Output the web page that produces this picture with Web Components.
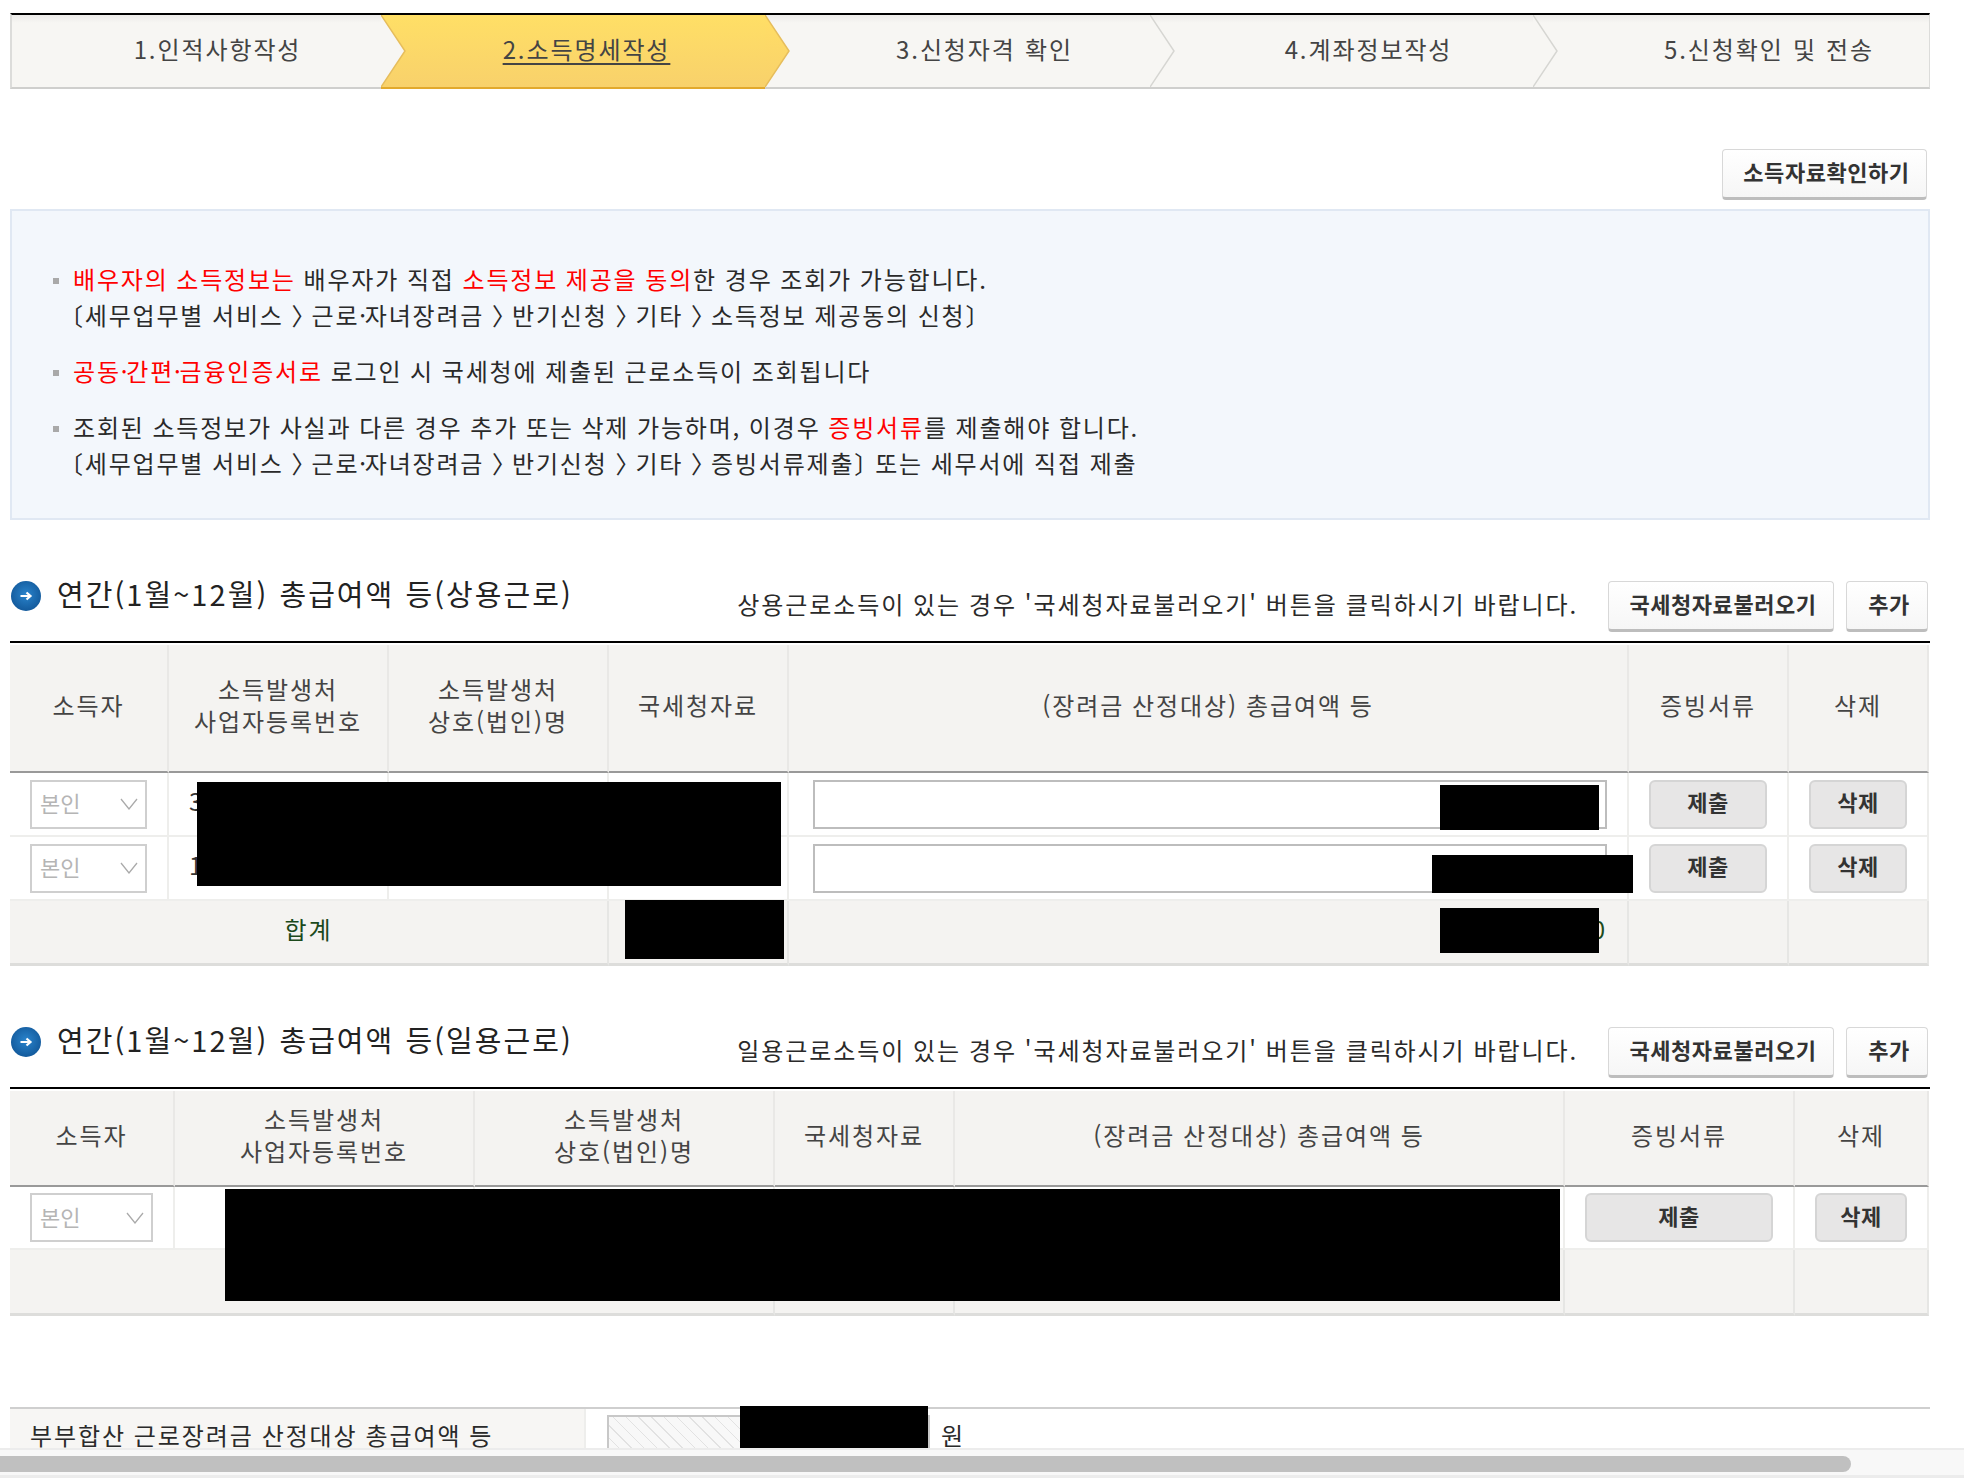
<!DOCTYPE html>
<html lang="ko">
<head>
<meta charset="utf-8">
<title>소득명세작성</title>
<style>
  html, body { margin: 0; padding: 0; background: #fff; }
  body { font-family: "Noto Sans CJK KR", "Noto Sans", sans-serif; color: #333; }
  .r { color: #f00; }
  .ang { letter-spacing: -11.8px; }
  .open { margin-left: -14px; }
  .close { letter-spacing: -11px; }
  .dot { letter-spacing: -1.2px; }
</style>
</head>
<body>
<app-page>
  <step-bar>
    <step-item width="369" pad="42" z="6">1.인적사항작성</step-item>
    <step-item width="384" pad="27" z="5" active>2.소득명세작성</step-item>
    <step-item width="385" pad="54" z="4">3.신청자격 확인</step-item>
    <step-item width="383" pad="54" z="3">4.계좌정보작성</step-item>
    <step-item width="397" pad="75" z="2" last>5.신청확인 및 전송</step-item>
  </step-bar>

  <top-actions><act-button w="205">소득자료확인하기</act-button></top-actions>

  <info-box>
    <info-item>
      <span class="r">배우자의 소득정보는</span> 배우자가 직접 <span class="r">소득정보 제공을 동의</span>한 경우 조회가 가능합니다.<br>
      <span class="open">〔</span>세무업무별 서비스 <span class="ang">〉</span> 근로<span class="dot">·</span>자녀장려금 <span class="ang">〉</span> 반기신청 <span class="ang">〉</span> 기타 <span class="ang">〉</span> 소득정보 제공동의 신청〕
    </info-item>
    <info-item>
      <span class="r">공동<span class="dot">·</span>간편<span class="dot">·</span>금융인증서로</span> 로그인 시 국세청에 제출된 근로소득이 조회됩니다
    </info-item>
    <info-item>
      조회된 소득정보가 사실과 다른 경우 추가 또는 삭제 가능하며, 이경우 <span class="r">증빙서류</span>를 제출해야 합니다.<br>
      <span class="open">〔</span>세무업무별 서비스 <span class="ang">〉</span> 근로<span class="dot">·</span>자녀장려금 <span class="ang">〉</span> 반기신청 <span class="ang">〉</span> 기타 <span class="ang">〉</span> 증빙서류제출<span class="close">〕</span> 또는 세무서에 직접 제출
    </info-item>
  </info-box>

  <section-head title="연간(1월~12월) 총급여액 등(상용근로)">
    상용근로소득이 있는 경우 '국세청자료불러오기' 버튼을 클릭하시기 바랍니다.
  </section-head>
  <income-table cols="159px 220px 220px 180px 840px 160px 140px" rows="128px 64px 64px 65px" lift="7">
    <tb-cell head>소득자</tb-cell>
    <tb-cell head>소득발생처<br>사업자등록번호</tb-cell>
    <tb-cell head>소득발생처<br>상호(법인)명</tb-cell>
    <tb-cell head>국세청자료</tb-cell>
    <tb-cell head>(장려금 산정대상) 총급여액 등</tb-cell>
    <tb-cell head>증빙서류</tb-cell>
    <tb-cell head>삭제</tb-cell>

    <tb-cell><pick-box w="117"></pick-box></tb-cell>
    <tb-cell start>3</tb-cell>
    <tb-cell></tb-cell>
    <tb-cell></tb-cell>
    <tb-cell><amount-input></amount-input></tb-cell>
    <tb-cell><act-button w="118" kind="gray">제출</act-button></tb-cell>
    <tb-cell><act-button w="98" kind="gray">삭제</act-button></tb-cell>

    <tb-cell><pick-box w="117"></pick-box></tb-cell>
    <tb-cell start>1</tb-cell>
    <tb-cell></tb-cell>
    <tb-cell></tb-cell>
    <tb-cell><amount-input></amount-input></tb-cell>
    <tb-cell><act-button w="118" kind="gray">제출</act-button></tb-cell>
    <tb-cell><act-button w="98" kind="gray">삭제</act-button></tb-cell>

    <tb-cell sum span="3">합계</tb-cell>
    <tb-cell sum></tb-cell>
    <tb-cell sum end>0</tb-cell>
    <tb-cell sum></tb-cell>
    <tb-cell sum></tb-cell>
  </income-table>

  <section-head title="연간(1월~12월) 총급여액 등(일용근로)">
    일용근로소득이 있는 경우 '국세청자료불러오기' 버튼을 클릭하시기 바랍니다.
  </section-head>
  <income-table cols="165px 300px 300px 180px 610px 230px 134px" rows="96px 63px 66px" lift="7">
    <tb-cell head>소득자</tb-cell>
    <tb-cell head>소득발생처<br>사업자등록번호</tb-cell>
    <tb-cell head>소득발생처<br>상호(법인)명</tb-cell>
    <tb-cell head>국세청자료</tb-cell>
    <tb-cell head>(장려금 산정대상) 총급여액 등</tb-cell>
    <tb-cell head>증빙서류</tb-cell>
    <tb-cell head>삭제</tb-cell>

    <tb-cell><pick-box w="123"></pick-box></tb-cell>
    <tb-cell></tb-cell>
    <tb-cell></tb-cell>
    <tb-cell></tb-cell>
    <tb-cell></tb-cell>
    <tb-cell><act-button w="188" kind="gray">제출</act-button></tb-cell>
    <tb-cell><act-button w="92" kind="gray">삭제</act-button></tb-cell>

    <tb-cell sum span="3"></tb-cell>
    <tb-cell sum></tb-cell>
    <tb-cell sum></tb-cell>
    <tb-cell sum></tb-cell>
    <tb-cell sum></tb-cell>
  </income-table>

  <couple-row>부부합산 근로장려금 산정대상 총급여액 등</couple-row>

  <black-out x="197" y="782" w="584" h="104"></black-out>
  <black-out x="1440" y="785" w="159" h="45"></black-out>
  <black-out x="1432" y="855" w="201" h="38"></black-out>
  <black-out x="625" y="900" w="159" h="59"></black-out>
  <black-out x="1440" y="908" w="159" h="45"></black-out>
  <black-out x="225" y="1189" w="1335" h="112"></black-out>
  <black-out x="740" y="1406" w="188" h="47"></black-out>

  <page-scroll></page-scroll>
</app-page>

<script>
// shared text metrics for the whole screen
const TEXT = 'font-family:"Noto Sans CJK KR","Noto Sans",sans-serif;letter-spacing:var(--ls,1.9px);word-spacing:var(--ws,-0.7px);';

class AppPage extends HTMLElement {
  constructor() {
    super();
    this.attachShadow({ mode: "open" });
    this.shadowRoot.innerHTML = `
      <style>
        :host {
          display: block;
          position: relative;
          width: 1964px;
          height: 1478px;
          overflow: hidden;
          box-sizing: border-box;
          padding: 13px 34px 0 10px;
          background: #fff;
        }
      </style>
      <slot></slot>
    `;
  }
}

class StepBar extends HTMLElement {
  constructor() {
    super();
    this.attachShadow({ mode: "open" });
    this.shadowRoot.innerHTML = `
      <style>
        :host {
          display: flex;
          height: 76px;
          box-sizing: border-box;
          border-top: 2px solid #000;
          border-bottom: 2px solid #cfcfcd;
          border-left: 2px solid #dcdcda;
          border-right: 1px solid #dcdcda;
          background: linear-gradient(#ecebe9, #f7f6f3 8px);
        }
      </style>
      <slot></slot>
    `;
  }
}

class StepItem extends HTMLElement {
  constructor() {
    super();
    this.attachShadow({ mode: "open" });
  }

  connectedCallback() {
    const active = this.hasAttribute("active");
    const last = this.hasAttribute("last");
    const before = this.nextElementSibling && this.nextElementSibling.hasAttribute("active");
    const line = active || before ? "#e6bd5c" : "#d6d6d2";
    this.shadowRoot.innerHTML = `
      <style>
        :host {
          display: flex;
          position: relative;
          z-index: ${this.getAttribute("z")};
          align-items: center;
          justify-content: center;
          box-sizing: border-box;
          flex: 0 0 ${this.getAttribute("width")}px;
          padding: 0 0 5px ${this.getAttribute("pad")}px;
          height: 72px;
          font-size: 24px;
          color: #444;
          --ws: 0.5px;
          ${TEXT}
          background: ${active ? "linear-gradient(#ffdf66,#f8d16b)" : "transparent"};
          ${active ? "box-shadow: 0 2px 0 #e2a92c;" : ""}
        }
        span { ${active ? "text-decoration: underline; text-underline-offset: 4px;" : ""} }
        svg { position: absolute; left: 100%; top: 0; height: 72px; width: 26px; }
      </style>
      <span><slot></slot></span>
      ${last ? "" : `<svg viewBox="0 0 26 72"><defs><linearGradient id="g" x1="0" y1="0" x2="0" y2="1"><stop offset="0" stop-color="${active ? "#ffdf66" : "#f4f3f1"}"/><stop offset="0.1" stop-color="${active ? "#ffdd66" : "#f7f6f3"}"/><stop offset="1" stop-color="${active ? "#f8d16b" : "#f7f6f3"}"/></linearGradient></defs>
      <path d="M0 0 L24 36 L0 72 Z" fill="url(#g)"/><path d="M0 0 L24 36 L0 72" fill="none" stroke="${line}" stroke-width="1.5"/></svg>`}
    `;
  }
}

class TopActions extends HTMLElement {
  constructor() {
    super();
    this.attachShadow({ mode: "open" });
    this.shadowRoot.innerHTML = `
      <style>
        :host { display: flex; justify-content: flex-end; margin-top: 60px; padding-right: 3px; }
      </style>
      <slot></slot>
    `;
  }
}

class ActButton extends HTMLElement {
  constructor() {
    super();
    this.attachShadow({ mode: "open" });
  }

  connectedCallback() {
    const gray = this.getAttribute("kind") === "gray";
    this.shadowRoot.innerHTML = `
      <style>
        :host {
          display: inline-flex;
          align-items: center;
          justify-content: center;
          flex: none;
          box-sizing: border-box;
          width: ${this.getAttribute("w")}px;
          height: ${gray ? 49 : 51}px;
          font-size: 22px;
          font-weight: 700;
          color: #333;
          --ls: 0.55px;
          ${TEXT}
          ${gray
            ? "background:#e7e6e6;border:2px solid #d5d5d5;border-radius:6px;padding-bottom:6px;"
            : "background:linear-gradient(#fff,#f6f6f6);border:1px solid #d8d8d8;border-bottom:3px solid #bdbdbd;border-radius:4px;padding:0 0 5px 4px;"}
        }
      </style>
      <slot></slot>
    `;
  }
}

class InfoBox extends HTMLElement {
  constructor() {
    super();
    this.attachShadow({ mode: "open" });
    this.shadowRoot.innerHTML = `
      <style>
        :host {
          display: flex;
          flex-direction: column;
          gap: 20px;
          box-sizing: border-box;
          width: 1920px;
          height: 311px;
          margin-top: 9px;
          padding: 50px 0 0 41px;
          background: #f3f7fc;
          border: 2px solid #e0e8f3;
        }
      </style>
      <slot></slot>
    `;
  }
}

class InfoItem extends HTMLElement {
  constructor() {
    super();
    this.attachShadow({ mode: "open" });
    this.shadowRoot.innerHTML = `
      <style>
        :host {
          display: block;
          position: relative;
          padding-left: 20px;
          font-size: 24px;
          line-height: 36px;
          color: #2a2a2a;
          --ls: 1.8px;
          ${TEXT}
        }
        :host::before {
          content: "";
          position: absolute;
          left: 0;
          top: 17px;
          width: 6px;
          height: 6px;
          background: #a9a9a9;
        }
      </style>
      <slot></slot>
    `;
  }
}

class SectionHead extends HTMLElement {
  constructor() {
    super();
    this.attachShadow({ mode: "open" });
  }

  connectedCallback() {
    this.shadowRoot.innerHTML = `
      <style>
        :host {
          display: flex;
          box-sizing: border-box;
          width: 1920px;
          height: 62px;
          margin-top: 61px;
          border-bottom: 2px solid #000;
        }
        svg { width: 30px; height: 30px; flex: none; margin: 0 16px 0 1px; }
        h3 {
          margin: -8px 0 0;
          font-size: 29px;
          line-height: 40px;
          font-weight: 400;
          color: #222;
          --ws: 1px;
          --ls: 2.05px;
          ${TEXT}
          white-space: nowrap;
        }
        p {
          margin: 2px 30px 0 auto;
          font-size: 24px;
          line-height: 42px;
          color: #2a2a2a;
          ${TEXT}
          white-space: nowrap;
        }
        .btns { display: flex; gap: 12px; padding-right: 2px; }
      </style>
      <svg viewBox="0 0 30 30">
        <defs><radialGradient id="b" cx="50%" cy="45%" r="55%"><stop offset="0" stop-color="#2a84cc"/><stop offset="1" stop-color="#135a9c"/></radialGradient></defs>
        <circle cx="15" cy="15" r="15" fill="url(#b)"/>
        <path d="M9.5 15 H19 M15.5 11.5 L19.5 15 L15.5 18.5" fill="none" stroke="#fff" stroke-width="2.2"/>
      </svg>
      <h3>${this.getAttribute("title")}</h3>
      <p><slot></slot></p>
      <div class="btns">
        <act-button w="226">국세청자료불러오기</act-button>
        <act-button w="82">추가</act-button>
      </div>
    `;
  }
}

class IncomeTable extends HTMLElement {
  constructor() {
    super();
    this.attachShadow({ mode: "open" });
  }

  connectedCallback() {
    this.shadowRoot.innerHTML = `
      <style>
        :host {
          display: grid;
          width: 1919px;
          margin-top: 2px;
          --lift: ${this.getAttribute("lift")}px;
          grid-template-columns: ${this.getAttribute("cols")};
          grid-template-rows: ${this.getAttribute("rows")};
        }
      </style>
      <slot></slot>
    `;
  }
}

class TbCell extends HTMLElement {
  constructor() {
    super();
    this.attachShadow({ mode: "open" });
    this.shadowRoot.innerHTML = `
      <style>
        :host {
          display: flex;
          align-items: center;
          justify-content: center;
          box-sizing: border-box;
          text-align: center;
          font-size: 24px;
          line-height: 32px;
          color: #333;
          background: #fff;
          border-right: 2px solid #eeeeec;
          border-bottom: 2px solid #eeeeec;
          ${TEXT}
        }
        :host([head]) {
          background: #f4f3f1;
          color: #444;
          padding-bottom: var(--lift);
          border-right-color: #e9e8e6;
          border-bottom: 2px solid #999;
        }
        :host([sum]) {
          background: #f4f3f1;
          color: #1c4a1c;
          padding-bottom: var(--lift);
          border-right-color: #e6e6e4;
          border-bottom: 3px solid #dddddb;
        }
        :host([start]) { justify-content: flex-start; padding-left: 20px; padding-bottom: var(--lift); }
        :host([end]) { justify-content: flex-end; padding-right: 20px; }
        :host([span="3"]) { grid-column: span 3; }
      </style>
      <slot></slot>
    `;
  }
}

class PickBox extends HTMLElement {
  constructor() {
    super();
    this.attachShadow({ mode: "open" });
  }

  connectedCallback() {
    this.shadowRoot.innerHTML = `
      <style>
        :host {
          display: flex;
          align-items: center;
          justify-content: space-between;
          box-sizing: border-box;
          width: ${this.getAttribute("w")}px;
          height: 49px;
          padding: 0 7px 0 8px;
          background: #fff;
          border: 2px solid #cfcfcf;
          font-size: 22px;
          color: #b5b5b5;
          --ls: 0;
          ${TEXT}
        }
        span { position: relative; top: -2px; }
        svg { width: 18px; height: 12px; }
      </style>
      <span>본인</span>
      <svg viewBox="0 0 18 12"><path d="M1 1 L9 11 L17 1" fill="none" stroke="#aaa" stroke-width="1.3"/></svg>
    `;
  }
}

class AmountInput extends HTMLElement {
  constructor() {
    super();
    this.attachShadow({ mode: "open" });
    this.shadowRoot.innerHTML = `
      <style>
        :host {
          display: block;
          box-sizing: border-box;
          width: 794px;
          height: 49px;
          margin-left: 4px;
          background: #fff;
          border: 2px solid #bdbdbd;
        }
      </style>
    `;
  }
}

class CoupleRow extends HTMLElement {
  constructor() {
    super();
    this.attachShadow({ mode: "open" });
    this.shadowRoot.innerHTML = `
      <style>
        :host {
          display: flex;
          box-sizing: border-box;
          width: 1920px;
          height: 60px;
          margin-top: 91px;
          border-top: 2px solid #cfcfcf;
          font-size: 24px;
          color: #2a2a2a;
          ${TEXT}
        }
        .lab {
          flex: 0 0 576px;
          box-sizing: border-box;
          padding: 8px 0 0 20px;
          background: #f7f6f4;
          border-right: 2px solid #eeeeec;
        }
        .val { display: flex; align-items: flex-start; padding: 6px 0 0 21px; }
        .hatch {
          box-sizing: border-box;
          width: 323px;
          height: 50px;
          border: 2px solid #c8c8c8;
          background: repeating-linear-gradient(45deg, #f8f8f8, #f8f8f8 8px, #e2e2e2 8px, #e2e2e2 9px);
        }
        .won { margin: 2px 0 0 11px; }
      </style>
      <div class="lab"><slot></slot></div>
      <div class="val"><div class="hatch"></div><span class="won">원</span></div>
    `;
  }
}

// redaction blocks painted over the finished table
class BlackOut extends HTMLElement {
  constructor() {
    super();
    this.attachShadow({ mode: "open" });
  }

  connectedCallback() {
    const a = (n) => this.getAttribute(n) + "px";
    this.shadowRoot.innerHTML = `
      <style>
        :host { position: absolute; z-index: 15; background: #000; left: ${a("x")}; top: ${a("y")}; width: ${a("w")}; height: ${a("h")}; }
      </style>
    `;
  }
}

class PageScroll extends HTMLElement {
  constructor() {
    super();
    this.attachShadow({ mode: "open" });
    this.shadowRoot.innerHTML = `
      <style>
        :host {
          position: absolute;
          z-index: 16;
          left: 0;
          right: 0;
          bottom: 0;
          height: 30px;
          box-sizing: border-box;
          padding-top: 6px;
          background: #f8f8f8;
          border-top: 2px solid #ececec;
          border-bottom: 3px solid #ececec;
        }
        div { width: 1851px; height: 16px; background: #c0c0c0; border-radius: 0 8px 8px 0; }
      </style>
      <div></div>
    `;
  }
}

customElements.define("app-page", AppPage);
customElements.define("step-bar", StepBar);
customElements.define("step-item", StepItem);
customElements.define("top-actions", TopActions);
customElements.define("act-button", ActButton);
customElements.define("info-box", InfoBox);
customElements.define("info-item", InfoItem);
customElements.define("section-head", SectionHead);
customElements.define("income-table", IncomeTable);
customElements.define("tb-cell", TbCell);
customElements.define("pick-box", PickBox);
customElements.define("amount-input", AmountInput);
customElements.define("couple-row", CoupleRow);
customElements.define("black-out", BlackOut);
customElements.define("page-scroll", PageScroll);
</script>
</body>
</html>
